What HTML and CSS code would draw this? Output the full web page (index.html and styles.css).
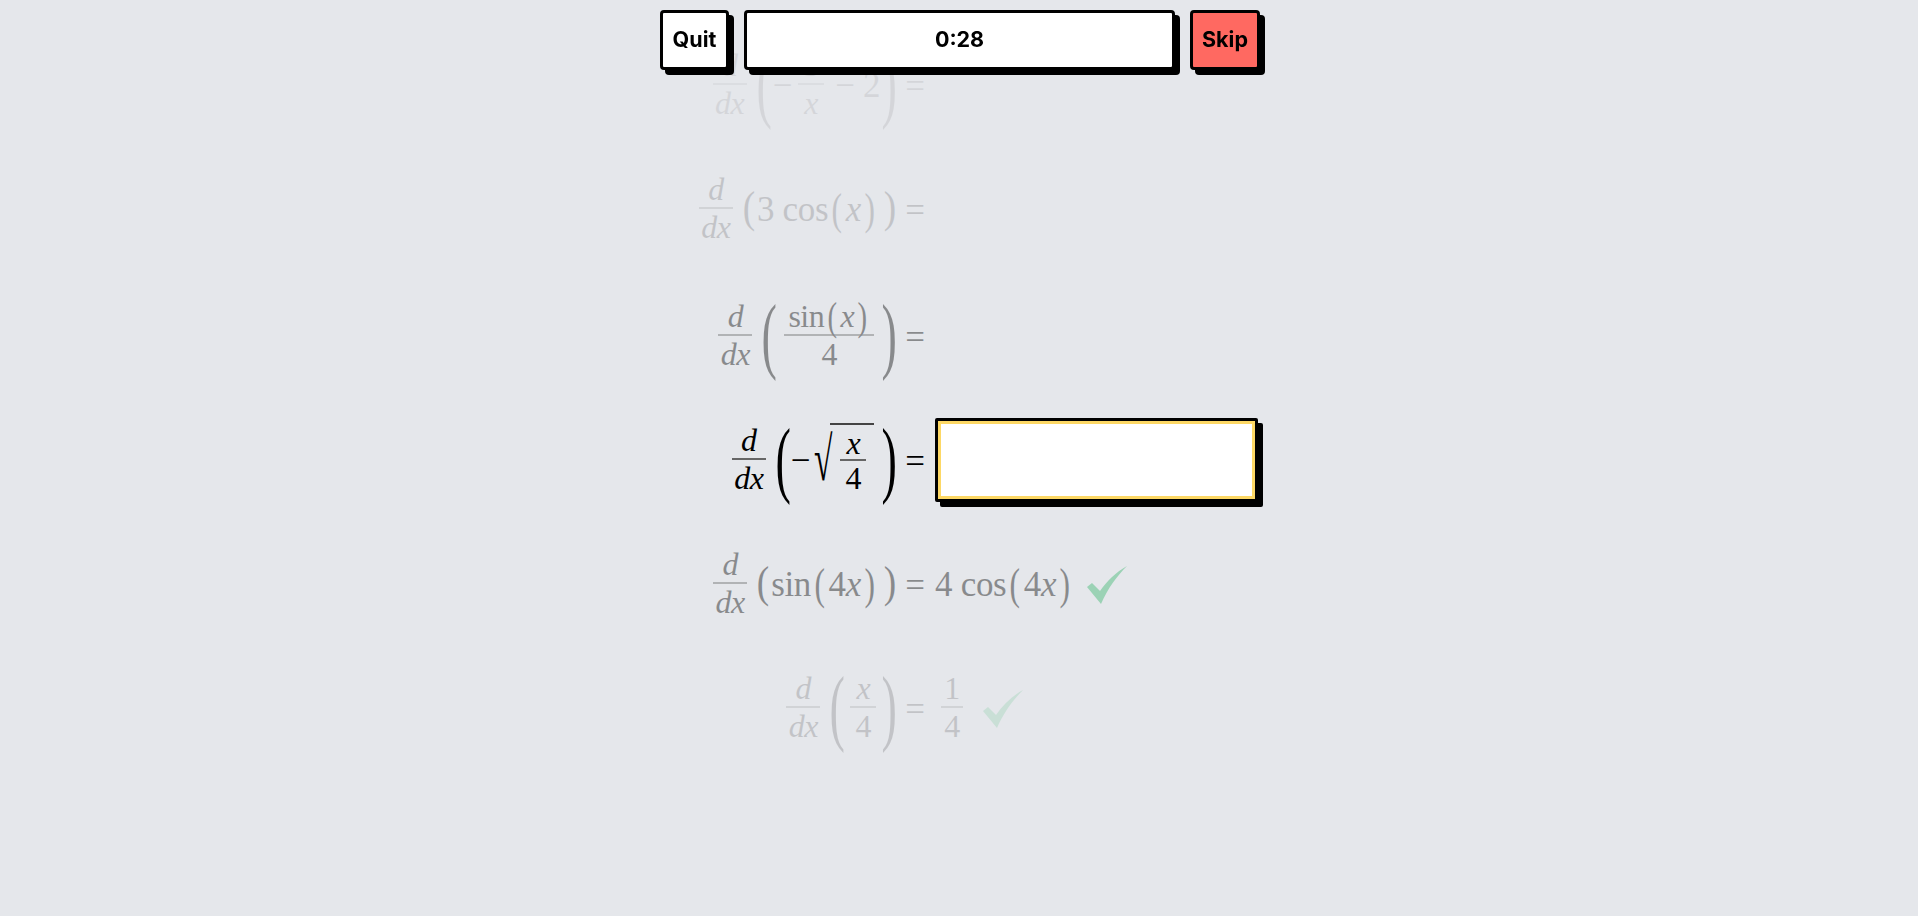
FILE: index.html
```html
<!DOCTYPE html>
<html lang="en">
<head>
	<meta charset="utf-8">
	<title>Derivatives</title>
	<link rel="stylesheet" href="styles.css">
</head>
<body>
	<header class="topBar">
		<button class="box quit">Quit</button>
		<div class="box timer">0:28</div>
		<button class="box skip">Skip</button>
	</header>

	<main class="rows">
		<div class="row fade1">
			<div class="expr">
				<span class="frac"><span class="num"><i>d</i></span><span class="den"><i>dx</i></span></span>
				<span class="paren tall">(</span>
				<span class="sym leadMinus">−</span>
				<span class="frac small"><span class="num">3</span><span class="den"><i>x</i></span></span>
				<span class="sym trailTerm">−&nbsp;2</span>
				<span class="paren tall">)</span>
				<span class="eq">=</span>
			</div>
			<div class="answer"></div>
		</div>

		<div class="row fade2">
			<div class="expr">
				<span class="frac"><span class="num"><i>d</i></span><span class="den"><i>dx</i></span></span>
				<span class="paren open">(</span>
				<span class="sym">3 cos<span class="fn">(</span><i>x</i><span class="fn">)</span></span>
				<span class="paren close">)</span>
				<span class="eq">=</span>
			</div>
			<div class="answer"></div>
		</div>

		<div class="row bigRow fade4">
			<div class="expr">
				<span class="frac"><span class="num"><i>d</i></span><span class="den"><i>dx</i></span></span>
				<span class="paren tall">(</span>
				<span class="frac wide"><span class="num">sin<span class="fn">(</span><i>x</i><span class="fn">)</span></span><span class="den">4</span></span>
				<span class="paren tall">)</span>
				<span class="eq">=</span>
			</div>
			<div class="answer"></div>
		</div>

		<div class="row">
			<div class="expr">
				<span class="frac"><span class="num"><i>d</i></span><span class="den"><i>dx</i></span></span>
				<span class="paren tall">(</span>
				<span class="sym minus">−</span>
				<span class="surd">√</span>
				<span class="radicand"><span class="frac small"><span class="num"><i>x</i></span><span class="den">4</span></span></span>
				<span class="paren tall">)</span>
				<span class="eq">=</span>
			</div>
			<div class="answer"><input class="box answerBox" type="text"></div>
		</div>

		<div class="row fade4">
			<div class="expr">
				<span class="frac"><span class="num"><i>d</i></span><span class="den"><i>dx</i></span></span>
				<span class="paren open">(</span>
				<span class="sym">sin<span class="fn">(</span>4<i>x</i><span class="fn">)</span></span>
				<span class="paren close">)</span>
				<span class="eq">=</span>
			</div>
			<div class="answer">
				<span class="sym">4 cos<span class="fn">(</span>4<i>x</i><span class="fn">)</span></span>
				<svg class="check" viewBox="0 0 40 38"><path d="M0 21 L5 17 L13 25 C20 15 29 6 40 0 C30 10 21 22 14 38 Z"/></svg>
			</div>
		</div>

		<div class="row fade2">
			<div class="expr">
				<span class="frac"><span class="num"><i>d</i></span><span class="den"><i>dx</i></span></span>
				<span class="paren tall">(</span>
				<span class="frac small inner"><span class="num"><i>x</i></span><span class="den">4</span></span>
				<span class="paren tall">)</span>
				<span class="eq">=</span>
			</div>
			<div class="answer">
				<span class="frac small result"><span class="num">1</span><span class="den">4</span></span>
				<svg class="check" viewBox="0 0 40 38"><path d="M0 21 L5 17 L13 25 C20 15 29 6 40 0 C30 10 21 22 14 38 Z"/></svg>
			</div>
		</div>
	</main>
</body>
</html>
```

FILE: styles.css
```css
html, body {
	margin: 0;
	height: 100%;
	overflow: hidden;
}
body {
	background: #e5e7eb;
	color: #000;
	font: 35px/1 "Liberation Serif", "DejaVu Serif", serif;
}

/* top bar sits over the scrolling rows */
.topBar {
	position: fixed;
	top: 10px;
	left: 660px;
	width: 600px;
	height: 60px;
	display: flex;
	gap: 15px;
	z-index: 2;
}
.box {
	box-sizing: border-box;
	background: #fff;
	border: 3px solid #000;
	border-radius: 4px;
	box-shadow: 5px 5px 0 #000;
}
.quit, .timer, .skip {
	display: flex;
	align-items: center;
	justify-content: center;
	padding: 0;
	color: #000;
	font: 700 21.5px/1 Inter, "Open Sans", sans-serif;
}
.quit {
	width: 69px;
}
.timer {
	flex: 1;
}
.skip {
	width: 70px;
	background: #ff6961;
}

.rows {
	display: flex;
	flex-direction: column;
	gap: 40px;
	width: 600px;
	padding-top: 42px;
	margin-left: 660px;
}
.row {
	display: grid;
	grid-template-columns: 265px 325px;
	column-gap: 10px;
	height: 84px;
	align-items: center;
}
.row.bigRow {
	height: 90px;
	margin-bottom: -3px;
}
.fade1 { opacity: .07; }
.fade2 { opacity: .15; }
.fade4 { opacity: .4; }

.expr, .answer {
	display: flex;
	align-items: center;
	white-space: nowrap;
}
.expr {
	justify-content: flex-end;
}
.answer {
	height: 84px;
}

.frac {
	display: inline-flex;
	flex-direction: column;
	align-items: center;
	padding: 0 2px;
	font-size: 32px;
	letter-spacing: -.5px;
}
.frac .num {
	align-self: stretch;
	box-sizing: border-box;
	min-width: 34px;
	text-align: center;
	line-height: 36px;
	padding: 0 2px;
	border-bottom: 2px solid #666;
}
.frac .den {
	line-height: 36px;
}
.frac.small .num {
	min-width: 26px;
}
.frac.wide {
	margin: 0 -2px 0 2px;
}
.frac.wide .num {
	padding: 0 4px;
}
.frac.inner {
	margin-right: -4px;
}
.frac.result {
	margin-left: 4px;
}
.frac.result .num {
	min-width: 22px;
}

.sym {
	margin-top: 2px;
	letter-spacing: -.3px;
}
.leadMinus {
	margin: 2px 4px 0 -2px;
}
.trailTerm {
	margin: 2px -6px 0 9px;
}
.fn {
	display: inline-block;
	transform: scale(.9, 1.25);
	margin: 0 3px;
}

.paren {
	display: inline-block;
	width: 16px;
	text-align: center;
	font-size: 44px;
	transform: scale(.85, 1);
}
.paren.open {
	margin: 0 0 0 6px;
}
.paren.close {
	margin: 0 2px 0 4px;
}
.paren.tall {
	font-size: 84px;
	line-height: 84px;
	transform: scale(.55, 1);
	width: 20px;
	margin: 0 3px;
}

.eq {
	margin: 5px 0 0 5px;
}

.minus {
	margin-left: -3px;
}
.surd {
	display: inline-block;
	font-size: 56px;
	line-height: 56px;
	width: 20px;
	transform: scale(.6, 1.1);
}
.radicand {
	display: inline-block;
	border-top: 2px solid #444;
	padding: 0 6px 0 8px;
}
.radicand .num {
	line-height: 32px;
}
.radicand .den {
	line-height: 34px;
}

.answerBox {
	width: 323px;
	height: 84px;
	margin-top: 2px;
	border-radius: 2px;
	outline: 3px solid #fdd865;
	outline-offset: -6px;
}

.check {
	width: 40px;
	height: 38px;
	margin: 3px 0 0 13px;
	fill: #2fb566;
}
.result + .check {
	margin-left: 18px;
}
```
